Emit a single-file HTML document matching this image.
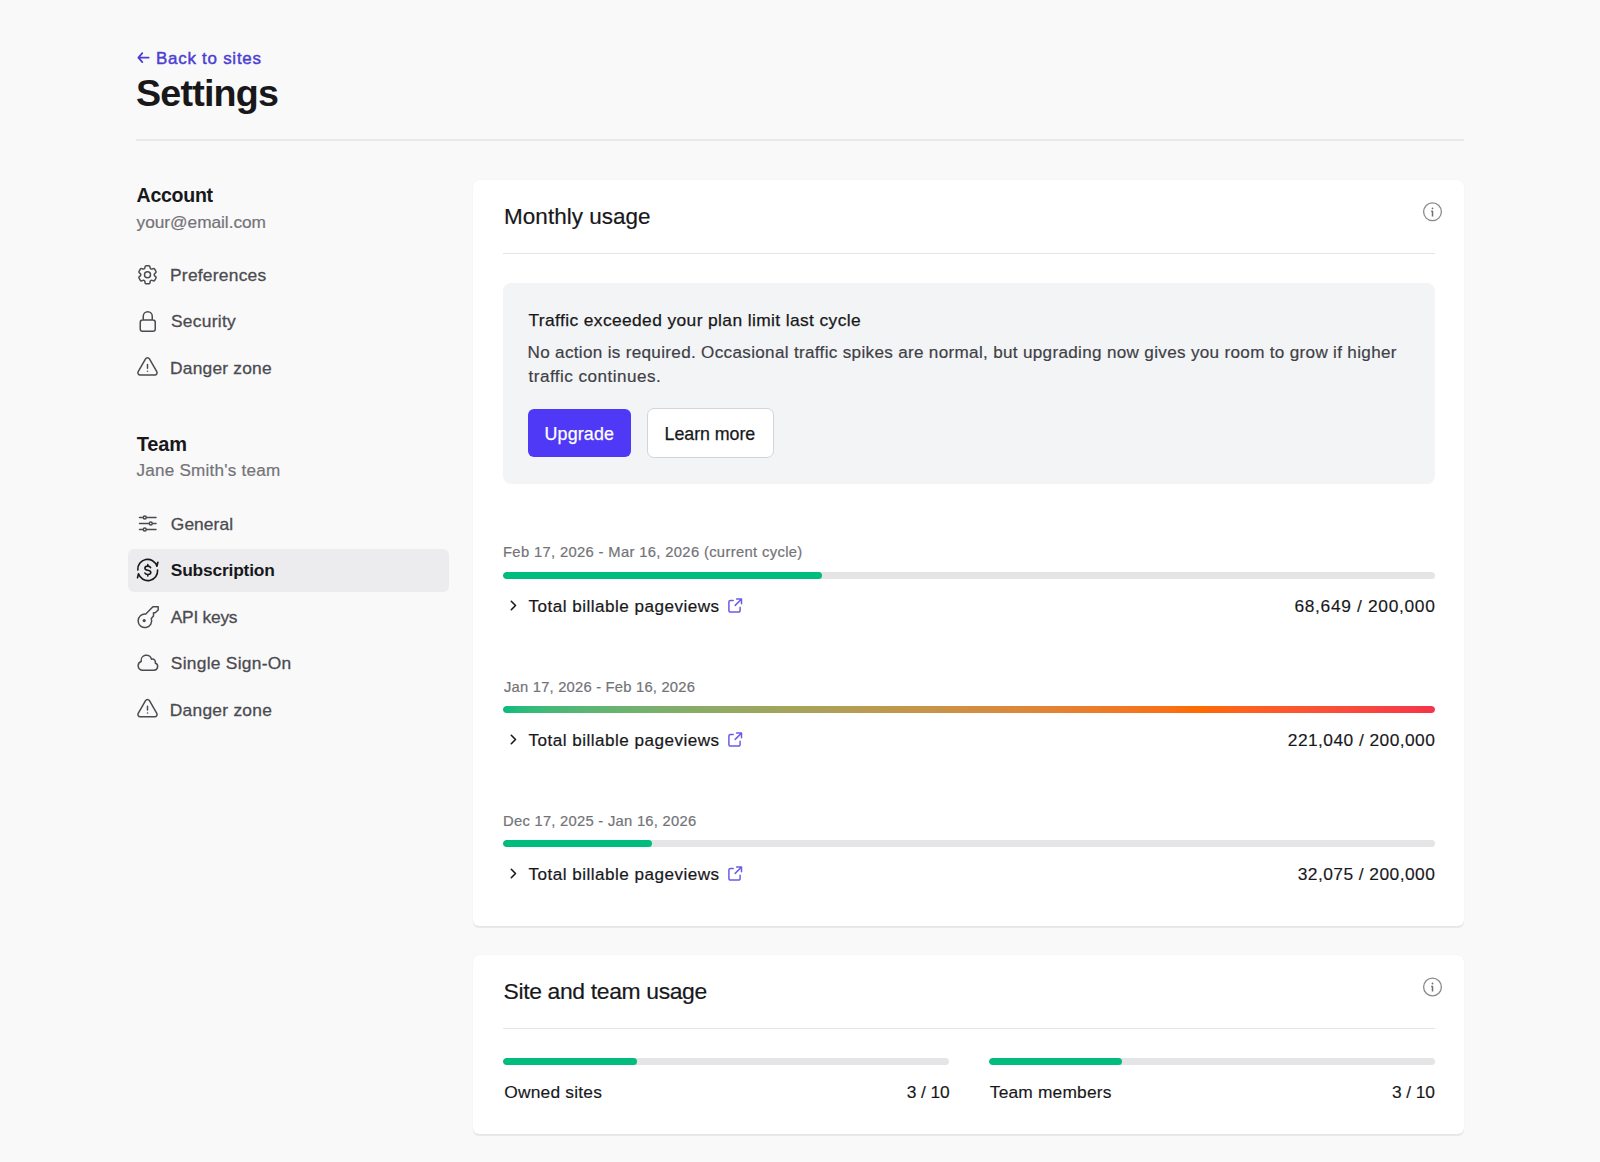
<!DOCTYPE html>
<html lang="en">
<head>
<meta charset="utf-8">
<title>Settings</title>
<style>
html,body{margin:0;padding:0}
body{width:1600px;height:1162px;overflow:hidden;position:relative;background:#f9f9fa;font-family:"Liberation Sans",sans-serif}
.t{position:absolute;white-space:nowrap;font-family:"Liberation Sans",sans-serif}
.b{position:absolute;box-sizing:border-box}
.card{position:absolute;background:#fff;border-radius:6px;box-shadow:0 1.5px 1px 0 rgba(0,0,0,.07),0 0 1px 0 rgba(0,0,0,.09)}
.bar{position:absolute;height:7px;border-radius:4px;background:#e5e5e7;overflow:hidden}
.fill{position:absolute;left:0;top:0;bottom:0;border-radius:4px;background:#00bc7d}
svg{position:absolute;left:0;top:0}
</style>
</head>
<body>
<!-- header rule -->
<div class="b" style="left:136px;top:139px;width:1328px;height:1.5px;background:#e9e9eb"></div>
<!-- sidebar highlight -->
<div class="b" style="left:127.5px;top:548.5px;width:321.5px;height:43.5px;border-radius:6px;background:#ececef"></div>

<!-- card 1 -->
<div class="card" style="left:473px;top:180px;width:991px;height:746px"></div>
<div class="b" style="left:503px;top:253px;width:932px;height:1px;background:#e5e5e8"></div>
<div class="b" style="left:503px;top:282.5px;width:932px;height:201px;border-radius:8px;background:#f3f4f6"></div>
<div class="b" style="left:527.6px;top:409.4px;width:103.4px;height:48.1px;border-radius:6px;background:#4f39f6"></div>
<div class="b" style="left:646.7px;top:408.1px;width:127.1px;height:50.3px;border-radius:7px;background:#fff;border:1px solid #d4d4d8"></div>

<div class="bar" style="left:503px;top:571.5px;width:932px"><div class="fill" style="width:319px"></div></div>
<div class="bar" style="left:503px;top:705.7px;width:932px"><div class="fill" style="width:932px;background:linear-gradient(90deg,#00bc7d 0%,#8fae58 25%,#c39a44 50%,#ff6900 75%,#f5344a 100%);background:linear-gradient(in oklab 90deg,#00bc7d 0%,#ff6900 75%,#f5344a 100%)"></div></div>
<div class="bar" style="left:503px;top:839.7px;width:932px"><div class="fill" style="width:149px"></div></div>

<!-- card 2 -->
<div class="card" style="left:473px;top:955px;width:991px;height:179px"></div>
<div class="b" style="left:503px;top:1028px;width:932px;height:1px;background:#e5e5e8"></div>
<div class="bar" style="left:503px;top:1058.3px;width:446px"><div class="fill" style="width:133.7px"></div></div>
<div class="bar" style="left:989px;top:1058.3px;width:446px"><div class="fill" style="width:133.3px"></div></div>

<svg width="1600" height="1162" viewBox="0 0 1600 1162" fill="none" stroke-linecap="round" stroke-linejoin="round">
  <!-- back arrow -->
  <path d="M148.6 57.7H138.4M142.3 53.2L138.4 57.7L142.3 62.1" stroke="#4c3ed4" stroke-width="1.8"/>
  <!-- gear -->
  <g transform="translate(135.5 262.7)" stroke="#4b4b50" stroke-width="1.5">
    <path d="M9.594 3.94c.09-.542.56-.94 1.11-.94h2.593c.55 0 1.02.398 1.11.94l.213 1.281c.063.374.313.686.645.87.074.04.147.083.22.127.325.196.72.257 1.075.124l1.217-.456a1.125 1.125 0 0 1 1.37.49l1.296 2.247a1.125 1.125 0 0 1-.26 1.431l-1.003.827c-.293.241-.438.613-.43.992a7.723 7.723 0 0 1 0 .255c-.008.378.137.75.43.991l1.004.827c.424.35.534.955.26 1.43l-1.298 2.247a1.125 1.125 0 0 1-1.369.491l-1.217-.456c-.355-.133-.75-.072-1.076.124a6.47 6.47 0 0 1-.22.128c-.331.183-.581.495-.644.869l-.213 1.281c-.09.543-.56.94-1.11.94h-2.594c-.55 0-1.019-.398-1.11-.94l-.213-1.281c-.062-.374-.312-.686-.644-.87a6.52 6.52 0 0 1-.22-.127c-.325-.196-.72-.257-1.076-.124l-1.217.456a1.125 1.125 0 0 1-1.369-.49l-1.297-2.247a1.125 1.125 0 0 1 .26-1.431l1.004-.827c.292-.24.437-.613.43-.991a6.932 6.932 0 0 1 0-.255c.007-.38-.138-.751-.43-.992l-1.004-.827a1.125 1.125 0 0 1-.26-1.43l1.297-2.247a1.125 1.125 0 0 1 1.37-.491l1.216.456c.356.133.751.072 1.076-.124.072-.044.146-.086.22-.128.332-.183.582-.495.644-.869l.214-1.28Z"/>
    <path d="M15 12a3 3 0 1 1-6 0 3 3 0 0 1 6 0Z"/>
  </g>
  <!-- lock -->
  <g transform="translate(135.75 309.5)" stroke="#4b4b50" stroke-width="1.5">
    <path d="M16.5 10.5V6.75a4.5 4.5 0 1 0-9 0v3.75m-.75 11.25h10.5a2.25 2.25 0 0 0 2.25-2.25v-6.75a2.25 2.25 0 0 0-2.25-2.25H6.75a2.25 2.25 0 0 0-2.25 2.25v6.75a2.25 2.25 0 0 0 2.25 2.25Z"/>
  </g>
  <!-- triangle 1 -->
  <g transform="translate(135.5 355.4)" stroke="#4b4b50" stroke-width="1.5">
    <path d="M12 9v3.75m-9.303 3.376c-.866 1.5.217 3.374 1.948 3.374h14.71c1.73 0 2.813-1.874 1.948-3.374L13.949 3.378c-.866-1.5-3.032-1.5-3.898 0L2.697 16.126ZM12 15.75h.007v.008H12v-.008Z"/>
  </g>
  <!-- sliders -->
  <g transform="translate(135.75 511.5)" stroke="#4b4b50" stroke-width="1.5">
    <path d="M10.5 6h9.75M10.5 6a1.5 1.5 0 1 1-3 0m3 0a1.5 1.5 0 1 0-3 0M3.75 6H7.5m3 12h9.75m-9.75 0a1.5 1.5 0 0 1-3 0m3 0a1.5 1.5 0 0 0-3 0m-3.75 0H7.5m9-6h3.75m-3.75 0a1.5 1.5 0 0 1-3 0m3 0a1.5 1.5 0 0 0-3 0m-9.75 0h9.75"/>
  </g>
  <!-- subscription -->
  <g stroke="#18181b" stroke-width="1.6">
    <path d="M137.8 570A9.8 9.8 0 0 1 156.9 566.2L157.9 562.2"/>
    <path d="M157.6 570A9.8 9.8 0 0 1 138.5 573.8L137.5 577.8"/>
    <path d="M150.6 567.6C150.2 566.7 149.2 566.1 147.8 566.1C146 566.1 144.9 567 144.9 568.2C144.9 569.6 146.2 570 147.8 570.3C149.5 570.6 150.8 571.1 150.8 572.5C150.8 573.7 149.6 574.5 147.8 574.5C146.4 574.5 145.3 573.9 144.9 573M147.8 564.5V566.1M147.8 574.5V576"/>
  </g>
  <!-- key -->
  <g stroke="#4b4b50" stroke-width="1.5">
    <path d="M145.8 614L152.9 606.7H158.2V610L155.2 612.8H153.5V615.9L151.3 618.4A6.8 6.8 0 1 1 145.8 614Z"/>
    <circle cx="144.2" cy="620.6" r="0.9" fill="#4b4b50"/>
  </g>
  <!-- cloud -->
  <g transform="translate(135.9 650.75)" stroke="#4b4b50" stroke-width="1.5">
    <path d="M2.25 15a4.5 4.5 0 0 0 4.5 4.5H18a3.75 3.75 0 0 0 1.332-7.257 3 3 0 0 0-3.758-3.848 5.25 5.25 0 0 0-10.233 2.33A4.502 4.502 0 0 0 2.25 15Z"/>
  </g>
  <!-- triangle 2 -->
  <g transform="translate(135.5 697.3)" stroke="#4b4b50" stroke-width="1.5">
    <path d="M12 9v3.75m-9.303 3.376c-.866 1.5.217 3.374 1.948 3.374h14.71c1.73 0 2.813-1.874 1.948-3.374L13.949 3.378c-.866-1.5-3.032-1.5-3.898 0L2.697 16.126ZM12 15.75h.007v.008H12v-.008Z"/>
  </g>
  <!-- info icons -->
  <g stroke="#8a8a8e" stroke-width="1.3">
    <circle cx="1432.5" cy="211.8" r="8.9"/>
    <circle cx="1432.5" cy="987" r="8.9"/>
  </g>
  <g stroke="#6e6e72" stroke-width="1.5" stroke-linecap="butt">
    <path d="M1431.2 211.2H1432.5V216.4"/>
    <path d="M1431.2 986.4H1432.5V991.6"/>
  </g>
  <g fill="#6e6e72">
    <circle cx="1432.5" cy="208.3" r="0.9"/>
    <circle cx="1432.5" cy="983.5" r="0.9"/>
  </g>
  <!-- chevrons + ext links -->
  <g id="row0">
    <path d="M511.3 601.3L515.5 605.5L511.3 609.7" stroke="#18181b" stroke-width="1.6"/>
    <path d="M733.2 600.5H730.5A1.6 1.6 0 0 0 728.9 602.1V610.5A1.6 1.6 0 0 0 730.5 612.1H738.5A1.6 1.6 0 0 0 740.1 610.5V607.2M735.2 605.4L741.3 599.2M736.6 598.9H741.5V603.7" stroke="#6b5ce7" stroke-width="1.5"/>
  </g>
  <g transform="translate(0 134)">
    <path d="M511.3 601.3L515.5 605.5L511.3 609.7" stroke="#18181b" stroke-width="1.6"/>
    <path d="M733.2 600.5H730.5A1.6 1.6 0 0 0 728.9 602.1V610.5A1.6 1.6 0 0 0 730.5 612.1H738.5A1.6 1.6 0 0 0 740.1 610.5V607.2M735.2 605.4L741.3 599.2M736.6 598.9H741.5V603.7" stroke="#6b5ce7" stroke-width="1.5"/>
  </g>
  <g transform="translate(0 268)">
    <path d="M511.3 601.3L515.5 605.5L511.3 609.7" stroke="#18181b" stroke-width="1.6"/>
    <path d="M733.2 600.5H730.5A1.6 1.6 0 0 0 728.9 602.1V610.5A1.6 1.6 0 0 0 730.5 612.1H738.5A1.6 1.6 0 0 0 740.1 610.5V607.2M735.2 605.4L741.3 599.2M736.6 598.9H741.5V603.7" stroke="#6b5ce7" stroke-width="1.5"/>
  </g>
</svg>
<div class="t" style="left:156.00px;top:47.12px;font-size:16.96px;line-height:23px;font-weight:normal;letter-spacing:0.746px;color:#4c3ed4;-webkit-text-stroke:0.45px #4c3ed4;">Back to sites</div>
<div class="t" style="left:136.00px;top:69.44px;font-size:37.68px;line-height:49px;font-weight:bold;letter-spacing:-0.808px;color:#18181b;">Settings</div>
<div class="t" style="left:136.60px;top:181.62px;font-size:19.57px;line-height:26px;font-weight:bold;letter-spacing:-0.289px;color:#18181b;">Account</div>
<div class="t" style="left:136.60px;top:210.51px;font-size:17.3px;line-height:23px;font-weight:normal;letter-spacing:-0.039px;color:#737378;-webkit-text-stroke:0.2px #737378;">your@email.com</div>
<div class="t" style="left:170.00px;top:264.47px;font-size:17.39px;line-height:23px;font-weight:normal;letter-spacing:0.251px;color:#4b4b50;-webkit-text-stroke:0.3px #4b4b50;">Preferences</div>
<div class="t" style="left:171.00px;top:309.77px;font-size:17.39px;line-height:23px;font-weight:normal;letter-spacing:0.275px;color:#4b4b50;-webkit-text-stroke:0.3px #4b4b50;">Security</div>
<div class="t" style="left:170.00px;top:357.47px;font-size:17.39px;line-height:23px;font-weight:normal;letter-spacing:0.217px;color:#4b4b50;-webkit-text-stroke:0.3px #4b4b50;">Danger zone</div>
<div class="t" style="left:136.70px;top:431.07px;font-size:20.0px;line-height:26px;font-weight:bold;letter-spacing:-0.16px;color:#18181b;">Team</div>
<div class="t" style="left:136.50px;top:459.17px;font-size:17.1px;line-height:23px;font-weight:normal;letter-spacing:0.229px;color:#737378;-webkit-text-stroke:0.2px #737378;">Jane Smith's team</div>
<div class="t" style="left:170.80px;top:512.67px;font-size:17.39px;line-height:23px;font-weight:normal;letter-spacing:0.074px;color:#4b4b50;-webkit-text-stroke:0.3px #4b4b50;">General</div>
<div class="t" style="left:170.80px;top:558.57px;font-size:17.39px;line-height:23px;font-weight:bold;letter-spacing:-0.197px;color:#18181b;">Subscription</div>
<div class="t" style="left:170.80px;top:606.17px;font-size:17.39px;line-height:23px;font-weight:normal;letter-spacing:-0.267px;color:#4b4b50;-webkit-text-stroke:0.3px #4b4b50;">API keys</div>
<div class="t" style="left:170.80px;top:652.47px;font-size:17.39px;line-height:23px;font-weight:normal;letter-spacing:0.269px;color:#4b4b50;-webkit-text-stroke:0.3px #4b4b50;">Single Sign-On</div>
<div class="t" style="left:169.80px;top:698.97px;font-size:17.39px;line-height:23px;font-weight:normal;letter-spacing:0.257px;color:#4b4b50;-webkit-text-stroke:0.3px #4b4b50;">Danger zone</div>
<div class="t" style="left:504.10px;top:202.42px;font-size:22.46px;line-height:30px;font-weight:normal;letter-spacing:0.038px;color:#18181b;-webkit-text-stroke:0.2px #18181b;">Monthly usage</div>
<div class="t" style="left:528.50px;top:309.47px;font-size:17.39px;line-height:23px;font-weight:normal;letter-spacing:0.39px;color:#18181b;-webkit-text-stroke:0.25px #18181b;">Traffic exceeded your plan limit last cycle</div>
<div class="t" style="left:527.50px;top:340.77px;font-size:17.1px;line-height:23px;font-weight:normal;letter-spacing:0.319px;color:#3f3f46;-webkit-text-stroke:0.2px #3f3f46;">No action is required. Occasional traffic spikes are normal, but upgrading now gives you room to grow if higher</div>
<div class="t" style="left:528.50px;top:365.27px;font-size:17.1px;line-height:23px;font-weight:normal;letter-spacing:0.482px;color:#3f3f46;-webkit-text-stroke:0.2px #3f3f46;">traffic continues.</div>
<div class="t" style="left:544.60px;top:421.92px;font-size:17.83px;line-height:24px;font-weight:normal;letter-spacing:0.155px;color:#ffffff;-webkit-text-stroke:0.25px #ffffff;">Upgrade</div>
<div class="t" style="left:664.60px;top:421.92px;font-size:17.83px;line-height:24px;font-weight:normal;letter-spacing:-0.062px;color:#18181b;-webkit-text-stroke:0.25px #18181b;">Learn more</div>
<div class="t" style="left:503.00px;top:541.88px;font-size:14.78px;line-height:20px;font-weight:normal;letter-spacing:0.344px;color:#737378;-webkit-text-stroke:0.2px #737378;">Feb 17, 2026 - Mar 16, 2026 (current cycle)</div>
<div class="t" style="left:528.50px;top:595.07px;font-size:17.1px;line-height:23px;font-weight:normal;letter-spacing:0.476px;color:#18181b;-webkit-text-stroke:0.22px #18181b;">Total billable pageviews</div>
<div class="t" style="left:1294.40px;top:594.97px;font-size:17.39px;line-height:23px;font-weight:normal;letter-spacing:0.669px;color:#18181b;-webkit-text-stroke:0.15px #18181b;">68,649 / 200,000</div>
<div class="t" style="left:504.00px;top:677.48px;font-size:14.78px;line-height:20px;font-weight:normal;letter-spacing:0.207px;color:#737378;-webkit-text-stroke:0.2px #737378;">Jan 17, 2026 - Feb 16, 2026</div>
<div class="t" style="left:528.50px;top:729.07px;font-size:17.1px;line-height:23px;font-weight:normal;letter-spacing:0.476px;color:#18181b;-webkit-text-stroke:0.22px #18181b;">Total billable pageviews</div>
<div class="t" style="left:1287.79px;top:728.97px;font-size:17.39px;line-height:23px;font-weight:normal;letter-spacing:0.436px;color:#18181b;-webkit-text-stroke:0.15px #18181b;">221,040 / 200,000</div>
<div class="t" style="left:503.00px;top:810.68px;font-size:14.78px;line-height:20px;font-weight:normal;letter-spacing:0.264px;color:#737378;-webkit-text-stroke:0.2px #737378;">Dec 17, 2025 - Jan 16, 2026</div>
<div class="t" style="left:528.50px;top:863.07px;font-size:17.1px;line-height:23px;font-weight:normal;letter-spacing:0.476px;color:#18181b;-webkit-text-stroke:0.22px #18181b;">Total billable pageviews</div>
<div class="t" style="left:1297.70px;top:862.97px;font-size:17.39px;line-height:23px;font-weight:normal;letter-spacing:0.449px;color:#18181b;-webkit-text-stroke:0.15px #18181b;">32,075 / 200,000</div>
<div class="t" style="left:503.50px;top:976.47px;font-size:22.9px;line-height:30px;font-weight:normal;letter-spacing:-0.347px;color:#18181b;-webkit-text-stroke:0.2px #18181b;">Site and team usage</div>
<div class="t" style="left:504.30px;top:1081.47px;font-size:17.39px;line-height:23px;font-weight:normal;letter-spacing:0.198px;color:#18181b;-webkit-text-stroke:0.15px #18181b;">Owned sites</div>
<div class="t" style="left:906.80px;top:1081.47px;font-size:17.39px;line-height:23px;font-weight:normal;letter-spacing:-0.102px;color:#18181b;-webkit-text-stroke:0.15px #18181b;">3 / 10</div>
<div class="t" style="left:989.80px;top:1081.47px;font-size:17.39px;line-height:23px;font-weight:normal;letter-spacing:0.17px;color:#18181b;-webkit-text-stroke:0.15px #18181b;">Team members</div>
<div class="t" style="left:1392.00px;top:1081.47px;font-size:17.39px;line-height:23px;font-weight:normal;letter-spacing:-0.102px;color:#18181b;-webkit-text-stroke:0.15px #18181b;">3 / 10</div>
</body>
</html>
